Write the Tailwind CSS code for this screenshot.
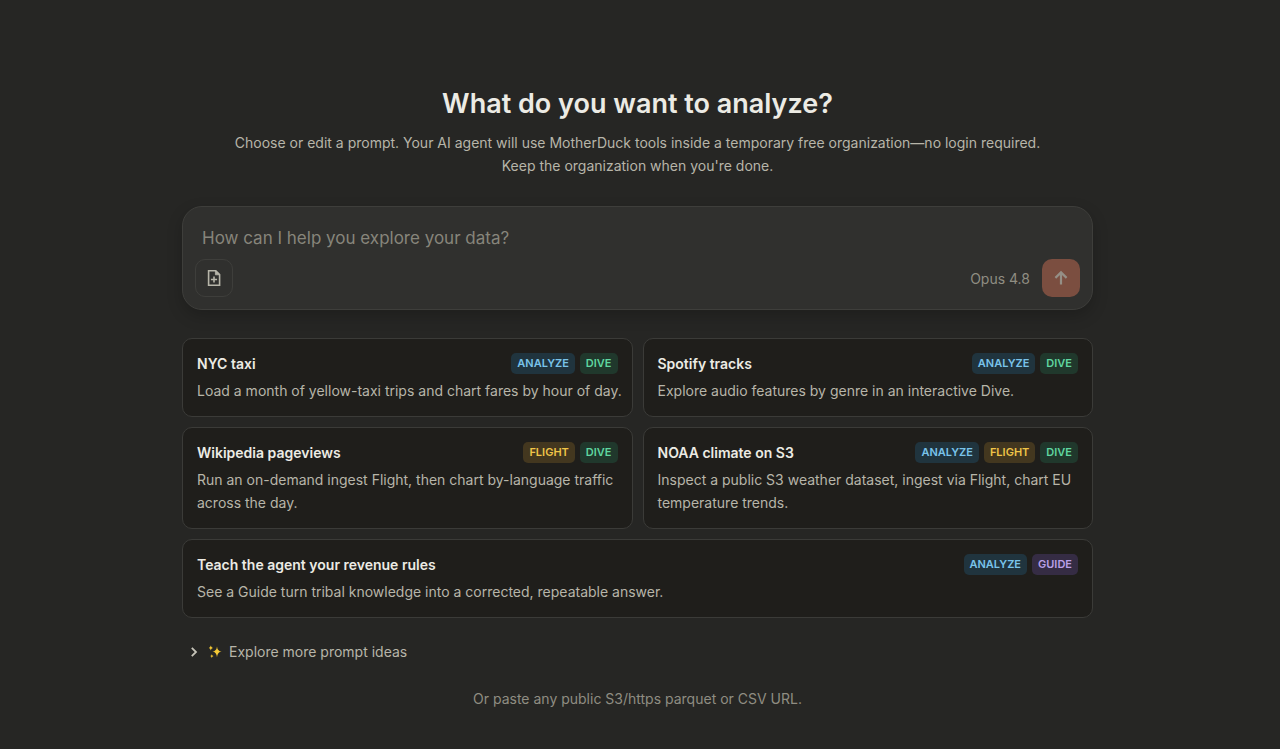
<!DOCTYPE html>
<html lang="en">
<head>
    <meta charset="UTF-8">
    <meta name="viewport" content="width=device-width, initial-scale=1.0">
    <title>What do you want to analyze?</title>
    <script src="https://cdn.jsdelivr.net/npm/@tailwindcss/browser@4"></script>
</head>
<body class="min-h-screen bg-[#262624] pr-[5px] font-['Inter','Liberation_Sans',sans-serif] text-sm leading-[23px] text-[#b7b5a9]">
    <main class="mx-auto w-full max-w-[911px] pt-[85px] pb-9">

        <!-- Heading -->
        <header class="text-center">
            <h1 class="text-[27px] leading-[38px] font-semibold text-[#ecebe4]">What do you want to analyze?</h1>
            <p class="mx-auto mt-2 max-w-[820px]">Choose or edit a prompt. Your AI agent will use MotherDuck tools inside a temporary free organization—no login required.<br>Keep the organization when you're done.</p>
        </header>

        <!-- Prompt box -->
        <form class="mt-[29px] rounded-[20px] border border-[#3e3e3b] bg-[#30302e] p-3 shadow-[0_6px_16px_rgba(0,0,0,0.2)]">
            <input type="text" aria-label="Prompt" placeholder="How can I help you explore your data?" class="mt-[5px] block h-7 w-full bg-transparent px-[7px] text-[17px] leading-7 text-[#ecebe4] outline-none placeholder:text-[#87857b]">
            <div class="mt-[7px] flex items-center justify-between">
                <button type="button" aria-label="Add file" class="flex size-[38px] items-center justify-center rounded-[10px] border border-[#3e3e3b] text-[#b7b5a9]">
                    <svg class="size-[18px]" viewBox="0 0 18 18" fill="none" stroke="currentColor" stroke-width="1.6">
                        <path d="M3.6 1.8h7.2l3.800 3.800v10.600H3.600z"/>
                        <path d="M10.400 1.800v4h4.200z" fill="currentColor" stroke-width=".8"/>
                        <path d="M9 7.400v6.200M5.900 10.500h6.200"/>
                    </svg>
                </button>
                <div class="flex items-center gap-3">
                    <span class="text-[#8f8d82]">Opus 4.8</span>
                    <button type="submit" aria-label="Send" class="flex size-[38px] items-center justify-center rounded-[10px] bg-[#7b4e40] text-[#958f86]">
                        <svg class="size-[18px]" viewBox="0 0 18 18" fill="none" stroke="currentColor" stroke-width="2.2">
                            <path d="M9 15.500V3.600M3.400 8.900L9 3.400l5.600 5.500"/>
                        </svg>
                    </button>
                </div>
            </div>
        </form>

        <!-- Example prompts -->
        <section class="mt-7 grid gap-[10px] md:grid-cols-2">
            <button type="button" class="flex flex-col gap-[5px] rounded-[10px] border border-[#3b3b38] bg-[#1f1e1b] p-[14px] text-left">
                <span class="flex w-full items-center justify-between">
                    <span class="leading-[21px] font-semibold text-[#ecebe4]">NYC taxi</span>
                    <span class="flex gap-[5px] text-[11px] leading-[21px] font-semibold">
                        <span class="rounded-[5px] bg-[#20343e] px-[6px] text-[#79c3ea]">ANALYZE</span>
                        <span class="rounded-[5px] bg-[#20382c] px-[6px] text-[#5fd6a0]">DIVE</span>
                    </span>
                </span>
                <span class="md:whitespace-nowrap">Load a month of yellow-taxi trips and chart fares by hour of day.</span>
            </button>

            <button type="button" class="flex flex-col gap-[5px] rounded-[10px] border border-[#3b3b38] bg-[#1f1e1b] p-[14px] text-left">
                <span class="flex w-full items-center justify-between">
                    <span class="leading-[21px] font-semibold text-[#ecebe4]">Spotify tracks</span>
                    <span class="flex gap-[5px] text-[11px] leading-[21px] font-semibold">
                        <span class="rounded-[5px] bg-[#20343e] px-[6px] text-[#79c3ea]">ANALYZE</span>
                        <span class="rounded-[5px] bg-[#20382c] px-[6px] text-[#5fd6a0]">DIVE</span>
                    </span>
                </span>
                <span>Explore audio features by genre in an interactive Dive.</span>
            </button>

            <button type="button" class="flex flex-col gap-[5px] rounded-[10px] border border-[#3b3b38] bg-[#1f1e1b] p-[14px] text-left">
                <span class="flex w-full items-center justify-between">
                    <span class="leading-[21px] font-semibold text-[#ecebe4]">Wikipedia pageviews</span>
                    <span class="flex gap-[5px] text-[11px] leading-[21px] font-semibold">
                        <span class="rounded-[5px] bg-[#43371f] px-[6px] text-[#f0c548]">FLIGHT</span>
                        <span class="rounded-[5px] bg-[#20382c] px-[6px] text-[#5fd6a0]">DIVE</span>
                    </span>
                </span>
                <span>Run an on-demand ingest Flight, then chart by-language traffic across the day.</span>
            </button>

            <button type="button" class="flex flex-col gap-[5px] rounded-[10px] border border-[#3b3b38] bg-[#1f1e1b] p-[14px] text-left">
                <span class="flex w-full items-center justify-between">
                    <span class="leading-[21px] font-semibold text-[#ecebe4]">NOAA climate on S3</span>
                    <span class="flex gap-[5px] text-[11px] leading-[21px] font-semibold">
                        <span class="rounded-[5px] bg-[#20343e] px-[6px] text-[#79c3ea]">ANALYZE</span>
                        <span class="rounded-[5px] bg-[#43371f] px-[6px] text-[#f0c548]">FLIGHT</span>
                        <span class="rounded-[5px] bg-[#20382c] px-[6px] text-[#5fd6a0]">DIVE</span>
                    </span>
                </span>
                <span>Inspect a public S3 weather dataset, ingest via Flight, chart EU temperature trends.</span>
            </button>

            <button type="button" class="flex flex-col gap-[5px] rounded-[10px] border border-[#3b3b38] bg-[#1f1e1b] p-[14px] text-left md:col-span-2">
                <span class="flex w-full items-center justify-between">
                    <span class="leading-[21px] font-semibold text-[#ecebe4]">Teach the agent your revenue rules</span>
                    <span class="flex gap-[5px] text-[11px] leading-[21px] font-semibold">
                        <span class="rounded-[5px] bg-[#20343e] px-[6px] text-[#79c3ea]">ANALYZE</span>
                        <span class="rounded-[5px] bg-[#352c44] px-[6px] text-[#b9a0e8]">GUIDE</span>
                    </span>
                </span>
                <span>See a Guide turn tribal knowledge into a corrected, repeatable answer.</span>
            </button>
        </section>

        <!-- More ideas toggle -->
        <button type="button" class="mt-[22px] ml-[6px] flex items-center">
            <svg class="size-3 text-[#c6c4b9]" viewBox="0 0 12 12" fill="none" stroke="currentColor" stroke-width="1.8">
                <path d="M3.800 1.800L8 6l-4.200 4.200"/>
            </svg>
            <svg class="ml-2 size-[14px]" viewBox="0 0 14 14" fill="#f5c935">
                <path d="M9 1.400Q9.400 6 13.600 6.600Q9.400 7.200 9 12.200Q8.600 7.200 4.400 6.600Q8.600 6 9 1.400z"/>
                <path d="M2.800 .6Q3.100 2.600 4.900 3Q3.100 3.400 2.800 5.400Q2.500 3.400 .8 3Q2.500 2.600 2.800 .6z"/>
                <path d="M3.800 9.200Q4 10.800 5.500 11.100Q4 11.400 3.800 13Q3.600 11.400 2.200 11.100Q3.600 10.800 3.800 9.200z"/>
            </svg>
            <span class="ml-[7px]">Explore more prompt ideas</span>
        </button>

        <p class="mt-6 text-center text-[#8f8d82]">Or paste any public S3/https parquet or CSV URL.</p>
    </main>
</body>
</html>
